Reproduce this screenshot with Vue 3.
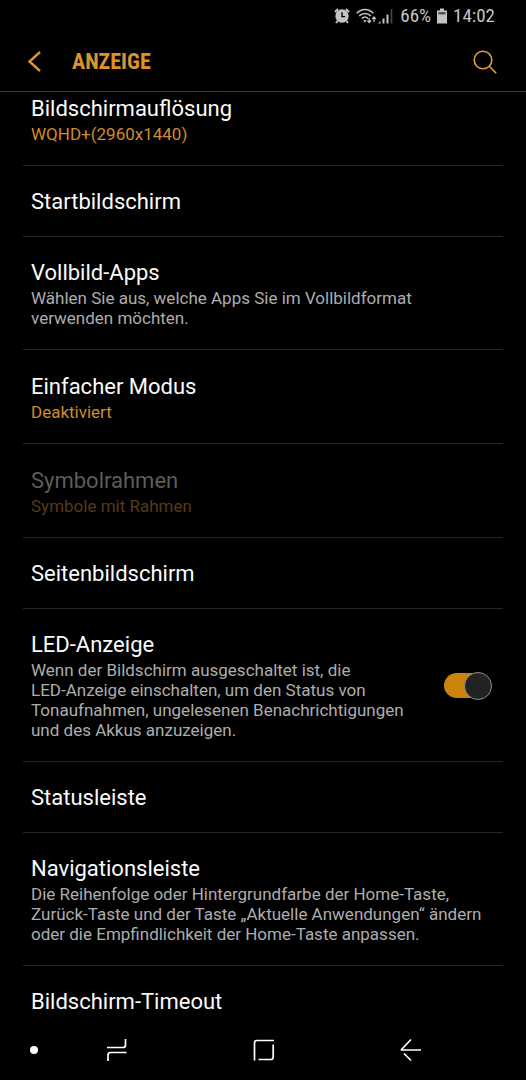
<script setup>
import { ref } from 'vue'

const ledOn = ref(true)

const items = [
  { id: 'resolution', title: 'Bildschirmauflösung', sub: 'WQHD+(2960x1440)', kind: 'value' },
  { id: 'home', title: 'Startbildschirm' },
  {
    id: 'fullscreen',
    title: 'Vollbild-Apps',
    sub: 'Wählen Sie aus, welche Apps Sie im Vollbildformat\nverwenden möchten.',
  },
  { id: 'easy', title: 'Einfacher Modus', sub: 'Deaktiviert', kind: 'value' },
  { id: 'frames', title: 'Symbolrahmen', sub: 'Symbole mit Rahmen', kind: 'value', disabled: true },
  { id: 'edge', title: 'Seitenbildschirm' },
  {
    id: 'led',
    title: 'LED-Anzeige',
    sub: 'Wenn der Bildschirm ausgeschaltet ist, die\nLED-Anzeige einschalten, um den Status von\nTonaufnahmen, ungelesenen Benachrichtigungen\nund des Akkus anzuzeigen.',
    toggle: true,
  },
  { id: 'status', title: 'Statusleiste' },
  {
    id: 'navigation',
    title: 'Navigationsleiste',
    sub: 'Die Reihenfolge oder Hintergrundfarbe der Home-Taste,\nZurück-Taste und der Taste „Aktuelle Anwendungen“ ändern\noder die Empfindlichkeit der Home-Taste anpassen.',
  },
  { id: 'timeout', title: 'Bildschirm-Timeout' },
]
</script>

<template>
  <div class="screen">
    <div class="status">
      <svg viewBox="0 0 16 16" width="16" height="16" aria-hidden="true">
        <path d="M1 4 4 1M15 4 12 1M3.5 13 2 15M12.5 13 14 15" stroke="#c4c4c4" stroke-width="2" />
        <circle cx="8" cy="8" r="6.7" fill="#c4c4c4" />
        <path d="M8 4.2V8.6H11.2" fill="none" stroke="#000" stroke-width="1.4" />
      </svg>
      <svg class="wifi" viewBox="0 0 21 16" width="21" height="16" aria-hidden="true">
        <g fill="none" stroke="#c4c4c4" stroke-width="1.6">
          <path d="M.7 5.2C5.5.2 12.5.2 17.3 5.2" />
          <path d="M3.2 8C6.5 4.6 11.5 4.6 14.8 8" />
          <path d="M5.8 10.6C7.800 8.6 10.2 8.6 12.2 10.6" />
        </g>
        <path d="M7 12.6Q9 11.2 10.6 12.600L9 14.600Z" fill="#c4c4c4" />
        <path d="M13.200 10V14M11.500 12.500 13.200 14.500 14.900 12.500M18 14V9.500M16.300 11 18 9 19.700 11" fill="none" stroke="#c4c4c4" stroke-width="1.2" />
      </svg>
      <svg class="signal" viewBox="0 0 16 16" width="16" height="16" aria-hidden="true">
        <path d="M0 15.5 2.5 13V15.5Z" fill="#c4c4c4" />
        <path d="M5.500 15.500V10.500M9.500 15.500V6.500" stroke="#c4c4c4" stroke-width="2" />
        <path d="M13.500 15.500V1" stroke="#4a4a4a" stroke-width="1.600" />
      </svg>
      <span class="percent">66%</span>
      <svg class="battery" viewBox="0 0 10 16" width="10" height="16" aria-hidden="true">
        <path d="M3 .5H7V2.500H10V15.500H0V2.500H3Z" fill="#c4c4c4" />
        <path d="M1.500 4H8.500V6.500H1.500Z" fill="#555" />
      </svg>
      <time>14:02</time>
    </div>

    <header class="bar">
      <button type="button" aria-label="Zurück">
        <svg viewBox="0 0 24 24" width="24" height="24" fill="none" stroke="#dc9427" stroke-width="2.4">
          <path d="M17 2 6.500 11.500 17 21" />
        </svg>
      </button>
      <h1>ANZEIGE</h1>
      <button type="button" aria-label="Suchen">
        <svg viewBox="0 0 24 24" width="24" height="24" fill="none" stroke="#e0a040" stroke-width="1.6">
          <circle cx="10" cy="10" r="8.800" />
          <path d="M16.300 16.300 23.200 23.200" />
        </svg>
      </button>
    </header>

    <main class="content">
      <ul class="list">
        <li v-for="item in items" :key="item.id">
          <component
            :is="item.toggle ? 'label' : 'button'"
            class="row"
            :class="{ detailed: item.sub, disabled: item.disabled }"
            :type="item.toggle ? undefined : 'button'"
            :disabled="item.disabled"
            :for="item.toggle ? item.id : undefined"
          >
            <span class="text">
              <span class="title">{{ item.title }}</span>
              <span v-if="item.sub" class="sub" :class="item.kind">{{ item.sub }}</span>
            </span>
            <span v-if="item.toggle" class="switch">
              <input :id="item.id" v-model="ledOn" type="checkbox" role="switch" />
            </span>
          </component>
        </li>
      </ul>
    </main>

    <nav class="nav">
      <button class="pin" type="button" aria-label="Leiste ausblenden"><span class="dot"></span></button>
      <button type="button" aria-label="Aktuelle Anwendungen">
        <svg viewBox="0 0 24 24" width="24" height="24" fill="none" stroke="#fff" stroke-width="1.7">
          <path d="M2 9.500H18Q20.500 9.500 20.500 7V1M3 23V17Q3 14.500 5.500 14.500H21.500" />
        </svg>
      </button>
      <button type="button" aria-label="Startseite">
        <svg viewBox="0 0 24 24" width="24" height="24" fill="none" stroke="#fff" stroke-width="1.7">
          <path d="M2.500 22.500V5Q2.500 2.500 5 2.500H22M21.200 6.500V19Q21.200 21.500 18.700 21.500H6.500" />
        </svg>
      </button>
      <button type="button" aria-label="Zurück">
        <svg viewBox="0 0 24 24" width="24" height="24" fill="none" stroke="#fff" stroke-width="1.7">
          <path d="M12 1.500 2.500 11.500V12H22M5 15.500 12 22.500" />
        </svg>
      </button>
    </nav>
  </div>
</template>

<style>
body {
  margin: 0;
  background: #000;
}
</style>

<style scoped>
.screen {
  display: flex;
  flex-direction: column;
  height: 100vh;
  background: #000;
  color: #fafafa;
  font-family: Roboto, "Noto Sans", sans-serif;
}

button {
  margin: 0;
  padding: 0;
  border: 0;
  background: none;
  color: inherit;
  font: inherit;
  text-align: left;
}

svg {
  display: block;
  flex: none;
}

.status {
  display: flex;
  align-items: center;
  justify-content: flex-end;
  height: 32px;
  padding-right: 31px;
  color: #c4c4c4;
  font-family: "Roboto Condensed", Roboto, sans-serif;
  font-size: 19px;
  line-height: 32px;
}

.wifi {
  margin-left: 6px;
}

.signal {
  margin-left: 1px;
}

.percent,
.battery,
time {
  margin-left: 6px;
}

.bar {
  display: flex;
  align-items: center;
  height: 59px;
  padding: 0 29px 0 23px;
  border-bottom: 1px solid #3c3c3c;
}

h1 {
  flex: 1;
  margin: 0 0 0 25px;
  color: #dc9427;
  font-family: "Roboto Condensed", Roboto, sans-serif;
  font-size: 22px;
  font-weight: 700;
  line-height: 28px;
}

.content {
  flex: 1;
  min-height: 0;
  overflow: hidden;
}

.list {
  margin: -20px 23px 0;
  padding: 0;
  list-style: none;
}

li {
  border-bottom: 1px solid #262626;
}

.row {
  display: flex;
  align-items: center;
  box-sizing: border-box;
  width: 100%;
  padding: 22px 8px 20px;
}

.detailed {
  min-height: 93px;
  padding-bottom: 21px;
}

.text {
  flex: 1;
}

.title,
.sub {
  display: block;
}

.title {
  font-size: 22px;
  line-height: 28px;
}

.sub {
  margin-top: 1px;
  color: #adadad;
  font-size: 17px;
  line-height: 20px;
  white-space: pre-line;
}

.value {
  color: #d18b2c;
}

.disabled .title {
  color: #5c5c5c;
}

.disabled .value {
  color: #573a15;
}

.switch {
  display: flex;
  margin-right: 3px;
}

.switch input {
  position: relative;
  width: 48px;
  height: 28px;
  margin: 0;
  appearance: none;
}

.switch input::before {
  position: absolute;
  inset: 1px 2px 2px 0;
  border-radius: 13px;
  background: #555;
  content: "";
}

.switch input:checked::before {
  background: #cb830b;
}

.switch input::after {
  position: absolute;
  top: 0;
  left: 0;
  box-sizing: border-box;
  width: 28px;
  height: 28px;
  border: 1px solid #8c8c8c;
  border-radius: 50%;
  background: #222;
  content: "";
}

.switch input:checked::after {
  right: 0;
  left: auto;
}

.nav {
  display: flex;
  height: 60px;
  padding: 0 42px 0 24px;
}

.nav button {
  display: flex;
  flex: 1;
  align-items: center;
  justify-content: center;
}

.nav .pin {
  flex: 0 0 20px;
}

.dot {
  width: 8px;
  height: 8px;
  border-radius: 50%;
  background: #fff;
}
</style>
